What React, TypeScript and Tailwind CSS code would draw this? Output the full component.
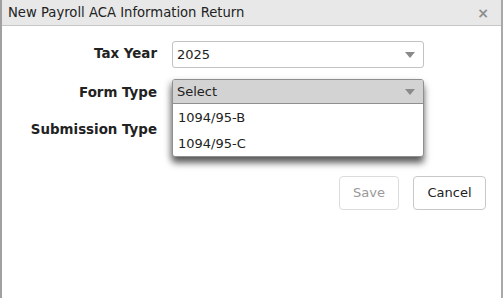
import React from "react";

const Caret = () => (
  <svg width="10" height="6" viewBox="0 0 10 6" className="absolute right-[8px] top-1/2 -translate-y-1/2">
    <path d="M0 0 L10 0 L5 6 Z" fill="#8a8a8a" />
  </svg>
);

export default function App() {
  return (
    <div
      className="w-[503px] h-[298px] bg-white flex flex-col border-l-2 border-l-[#a0a0a0] border-r-2 border-r-[#a9a9a9] overflow-hidden text-[13px] text-[#222]"
      style={{ fontFamily: '"DejaVu Sans", Verdana, sans-serif' }}
    >
      <div className="h-[26px] shrink-0 bg-[#e8e8e8] border-b border-[#c6c6c6] flex items-center justify-between pl-[6px] pr-[12px]">
        <span className="text-[13.2px] text-[#222]">New Payroll ACA Information Return</span>
        <span className="text-[#8e8e8e] text-[14px] font-bold leading-none">×</span>
      </div>
      <div className="flex flex-col pt-[15px]">
        <div className="flex items-center h-[27px]">
          <div className="w-[155px] text-right font-bold text-[13.4px]">Tax Year</div>
          <div className="ml-[15px] relative w-[252px] h-[27px] border border-[#c3c3c3] rounded-[3px] bg-white flex items-center pl-[4px]">
            2025
            <Caret />
          </div>
        </div>
        <div className="flex items-start mt-[11px] h-[78px]">
          <div className="w-[155px] flex flex-col pt-[2px]">
            <div className="h-[25px] flex items-center justify-end font-bold text-[13.4px]">Form Type</div>
            <div className="h-[25px] mt-[12px] flex items-center justify-end font-bold text-[13.4px]">Submission Type</div>
          </div>
          <div className="ml-[15px] relative w-[252px] h-[25px] z-10">
            <div className="w-[252px] rounded-[3px] border border-[#8f8f8f] bg-white shadow-[0_6px_7px_rgba(0,0,0,0.6),-3px_2px_6px_rgba(0,0,0,0.15)] overflow-hidden">
              <div className="relative h-[24px] bg-[#d3d3d3] border-b border-[#8f8f8f] flex items-center pl-[4px]">
                Select
                <Caret />
              </div>
              <div className="h-[26px] flex items-center pl-[5px] pt-[1px]">1094/95-B</div>
              <div className="h-[26px] flex items-center pl-[5px] pt-[1px]">1094/95-C</div>
            </div>
          </div>
        </div>
        <div className="flex justify-end gap-[14px] pr-[15px] mt-[19px]">
          <div className="w-[60px] h-[34px] border border-[#dcdcdc] rounded-[4px] flex items-center justify-center text-[#999]">Save</div>
          <div className="w-[73px] h-[34px] border border-[#c8c8c8] rounded-[4px] flex items-center justify-center text-[#222]">Cancel</div>
        </div>
      </div>
    </div>
  );
}
